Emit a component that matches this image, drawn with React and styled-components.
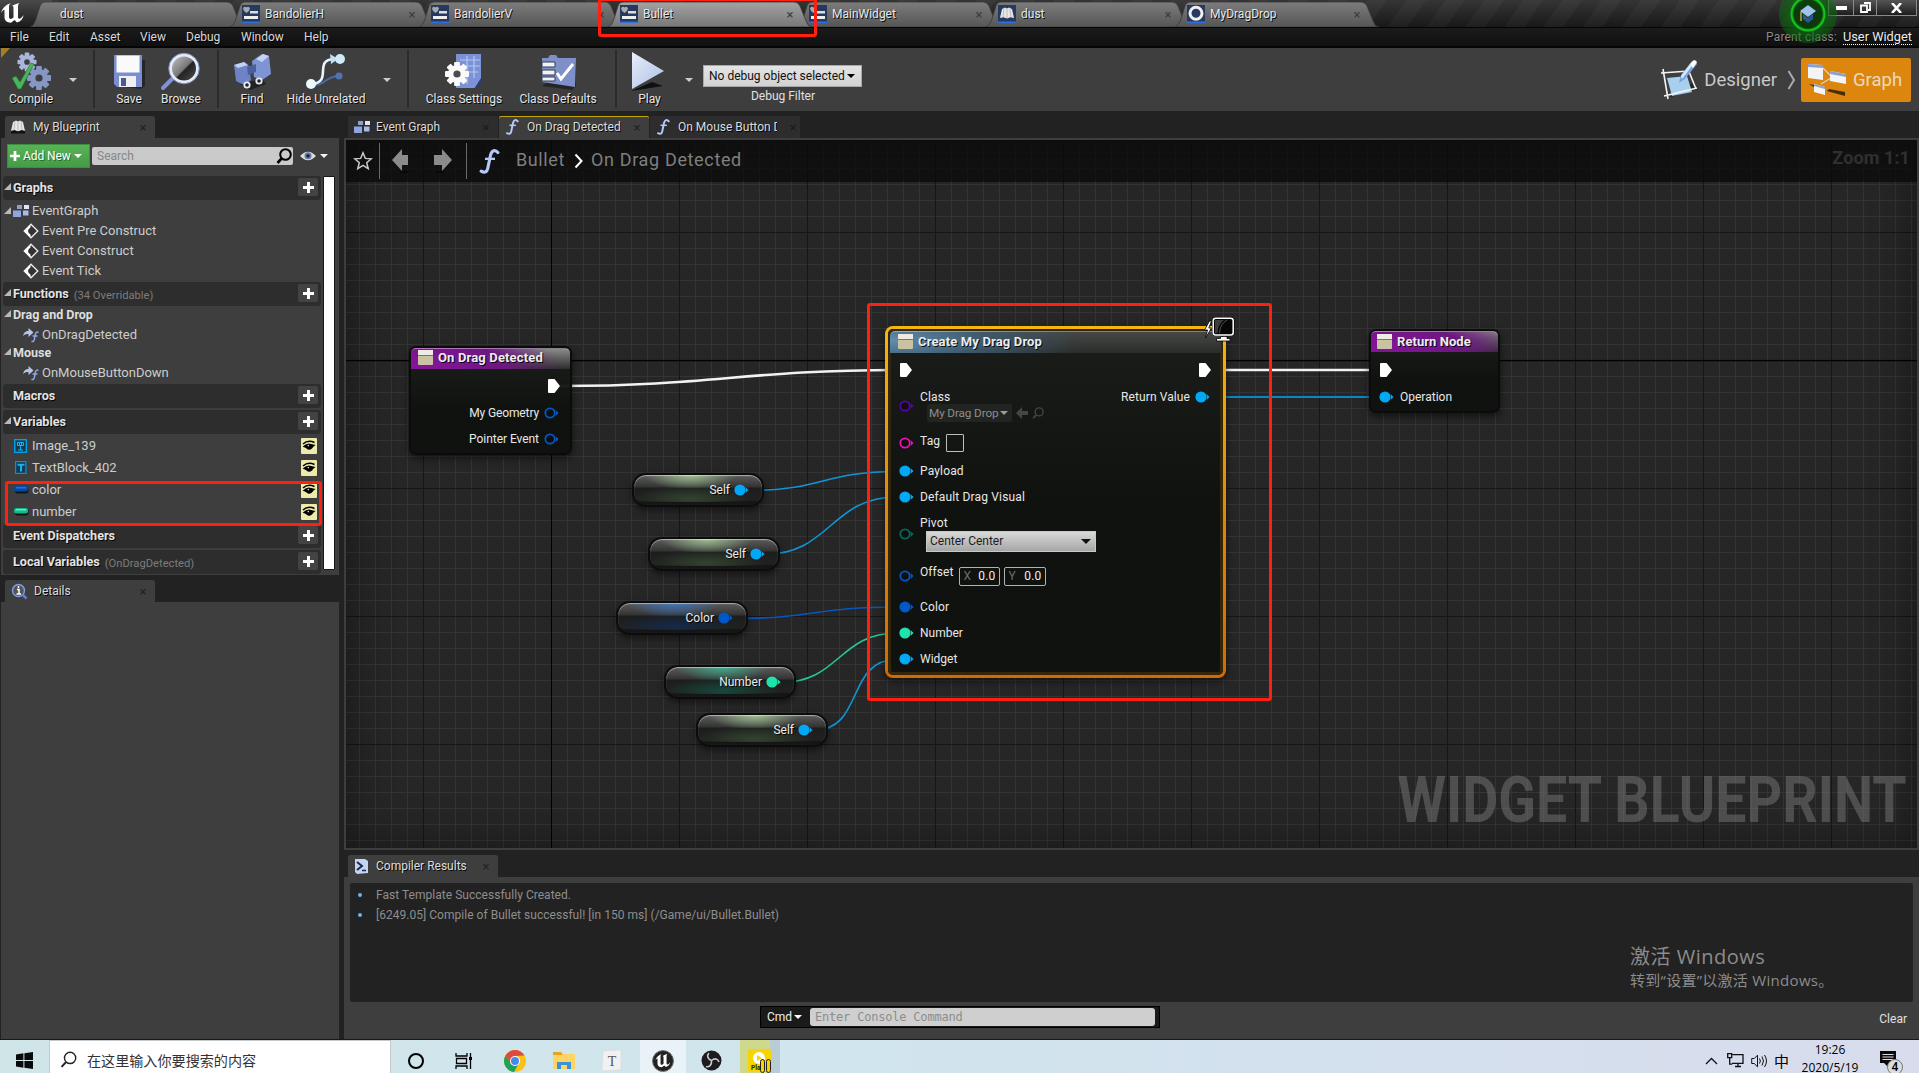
import React from "react";
import styled, { createGlobalStyle, css } from "styled-components";

const Global = createGlobalStyle`
  * { box-sizing: border-box; }
  html, body { margin: 0; padding: 0; background: #222; overflow: hidden; }
  body { font-family: Roboto, "Noto Sans CJK SC", sans-serif; font-size: 12px; color: #e0e0e0; }
  svg { display: block; flex: none; }
`;

const SHADOW = "1px 1px 0 rgba(0,0,0,0.9)";
const BLUE = "#00a8f6";
const STRUCT = "#0058c8";
const GREEN = "#1fe2ac";

/* ---------- shell ---------- */
const Screen = styled.div`
  position: relative;
  width: 1919px;
  height: 1073px;
  display: flex;
  flex-direction: column;
  overflow: hidden;
  background: #222;
`;

/* ---------- title bar ---------- */
const TitleBar = styled.div`
  display: flex;
  height: 28px;
  padding-left: 36px;
  position: relative;
  border-bottom: 1px solid #050505;
  background: linear-gradient(rgba(80, 80, 80, 0.35), rgba(0, 0, 0, 0.35)),
    repeating-linear-gradient(125deg, #303030 0 16px, #262626 16px 32px);
`;
const LogoBox = styled.div`
  position: absolute;
  left: 0;
  top: 0;
  width: 52px;
  height: 27px;
  background: linear-gradient(#4a4a4a, #1b1b1b);
`;
const WindowTab = styled.div`
  position: relative;
  width: ${(p) => p.$w || 189}px;
  height: 25px;
  margin-top: 2px;
  z-index: ${(p) => (p.$active ? 3 : p.$z || 1)};
`;
const TabShape = styled.svg`
  position: absolute;
  left: -6px;
  top: 0;
`;
const TabFace = styled.div`
  position: relative;
  display: flex;
  align-items: center;
  height: 24px;
  padding-left: ${(p) => p.$pad || 6}px;
  padding-right: 1px;
  gap: 5px;
  color: #e6e6e6;
  text-shadow: ${SHADOW};
`;
const Close = styled.span`
  margin-left: auto;
  width: 22px;
  flex: none;
  padding-right: 2px;
  text-align: center;
  color: ${(p) => p.$c || "#3c3c3c"};
  text-shadow: none;
  font-size: 13px;
  line-height: 1;
`;
const WindowButtons = styled.div`
  position: absolute;
  right: 2px;
  top: 0;
  display: flex;
`;
const WinBtn = styled.div`
  width: ${(p) => p.$w}px;
  height: 16px;
  display: flex;
  align-items: center;
  justify-content: center;
  border: 1px solid #8a8a8a;
  border-top: 0;
  margin-left: -1px;
  background: linear-gradient(#555, #1d1d1d);
`;
const TutorialBadge = styled.div`
  position: absolute;
  left: 1779px;
  top: -15px;
  width: 58px;
  height: 58px;
  border-radius: 50%;
  z-index: 6;
  display: flex;
  align-items: center;
  justify-content: center;
  background: radial-gradient(circle, rgba(10, 60, 10, 0.9) 0 14px, #12c41a 16px 17px, rgba(10, 110, 14, 0.7) 18px, rgba(14, 110, 18, 0.45) 28px, rgba(10, 190, 20, 0.3) 29px);
`;

/* ---------- menu ---------- */
const MenuBar = styled.div`
  display: flex;
  align-items: center;
  height: 20px;
  padding: 0 7px 2px 0;
  background: linear-gradient(#1b1b1b, #101010 90%, #050505 90%);
  color: #d8d8d8;
  text-shadow: ${SHADOW};
`;
const MenuItem = styled.span`
  padding-left: 10px;
  width: ${(p) => p.$w}px;
`;
const ParentClass = styled.div`
  margin-left: auto;
  display: flex;
  align-items: center;
  gap: 6px;
  color: #8a8a8a;
  letter-spacing: 0.15px;
  u {
    color: #ececec;
    font-size: 12.8px;
    letter-spacing: 0;
    text-decoration: none;
    border-bottom: 1px dotted #fff;
    line-height: 14px;
  }
`;

/* ---------- toolbar ---------- */
const Toolbar = styled.div`
  display: flex;
  height: 63px;
  background: #3e3e3e;
  position: relative;
`;
const DirtyCorner = styled.div`
  position: absolute;
  left: 1px;
  top: 0;
  border-top: 10px solid #a08020;
  border-right: 9px solid transparent;
`;
const ToolButton = styled.div`
  width: ${(p) => p.$w}px;
  display: flex;
  flex-direction: column;
  align-items: center;
  padding-top: 4px;
  color: #e6e6e6;
  text-shadow: ${SHADOW};
  white-space: nowrap;
  span { line-height: 15px; margin-top: 0; }
`;
const CaretCell = styled.div`
  width: ${(p) => p.$w || 22}px;
  display: flex;
  justify-content: center;
  padding-top: 30px;
`;
const Caret = styled.i`
  display: block;
  flex: none;
  border: ${(p) => p.$s || 4}px solid transparent;
  border-top-color: ${(p) => p.$c || "#ccc"};
  border-bottom: 0;
`;
const Divider = styled.div`
  width: 20px;
  display: flex;
  justify-content: center;
  padding: 2px 0 3px;
  &::before { content: ""; width: 2px; background: #2b2b2b; }
`;
const DebugBox = styled.div`
  display: flex;
  flex-direction: column;
  align-items: center;
  padding-top: 17px;
  gap: 2px;
`;
const DebugSelect = styled.div`
  width: 159px;
  height: 22px;
  margin-left: -1px;
  display: flex;
  align-items: center;
  justify-content: space-between;
  padding: 0 6px 0 5px;
  color: #101010;
  background: linear-gradient(#e4e4e4, #d2d2d2);
  border: 1px solid #a9a9a9;
`;
const Modes = styled.div`
  margin-left: auto;
  padding-right: 8px;
  display: flex;
  align-items: center;
`;
const ModeName = styled.span`
  font-size: 18.5px;
  font-weight: 400;
  color: #c9c9c9;
`;
const Designer = styled.div`
  display: flex;
  align-items: center;
  gap: 4px;
  margin-right: 10px;
`;
const GraphMode = styled.div`
  width: 110px;
  height: 44px;
  display: flex;
  align-items: center;
  gap: 6px;
  padding-left: 6px;
  margin-left: 5px;
  border-radius: 2px;
  background: #dd860e;
  ${ModeName} { color: #ead9bf; }
`;

/* ---------- docking ---------- */
const Workspace = styled.div`
  display: flex;
  height: 929px;
  border-bottom: 1px solid #1b1620;
`;
const LeftColumn = styled.div`
  width: 344px;
  display: flex;
  flex-direction: column;
  padding: 0 5px 0 1px;
`;
const RightColumn = styled.div`
  flex: 1;
  display: flex;
  flex-direction: column;
`;
const TabStrip = styled.div`
  height: 27px;
  padding: 5px 0 0 4px;
  display: flex;
  gap: 1px;
  flex: none;
  background: #222;
`;
const DockTab = styled.div`
  width: 150px;
  height: 22px;
  display: flex;
  align-items: center;
  padding-left: ${(p) => p.$pl || 6}px;
  gap: ${(p) => p.$gap || 6}px;
  color: #dcdcdc;
  text-shadow: ${SHADOW};
  white-space: nowrap;
  border-radius: 2px 2px 0 0;
  background: ${(p) => (p.$dim ? "#2d2d2d" : "#3e3e3e")};
  ${(p) => p.$lit && css`box-shadow: inset 0 1px 0 #c0a60a;`}
`;
const TabText = styled.span`
  overflow: hidden;
  flex: none;
  width: ${(p) => (p.$w ? p.$w + "px" : "auto")};
`;
const BlueprintPanel = styled.div`
  height: 437px;
  background: #3e3e3e;
  padding: 6px 0 0 2px;
`;
const SearchRow = styled.div`
  display: flex;
  align-items: center;
  padding-left: 4px;
  height: 24px;
`;
const AddNew = styled.div`
  width: 83px;
  height: 24px;
  display: flex;
  align-items: center;
  gap: 3px;
  padding-left: 2px;
  color: #fff;
  background: linear-gradient(#58b358, #449c46);
  border: 1px solid #3c8f3f;
  text-shadow: 1px 1px 0 rgba(0, 0, 0, 0.4);
  letter-spacing: -0.1px;
  white-space: nowrap;
`;
const SearchField = styled.div`
  width: 201px;
  height: 18px;
  margin: 0 6px 0 2px;
  display: flex;
  align-items: center;
  justify-content: space-between;
  padding: 0 1px 0 5px;
  border-radius: 2px;
  color: #878787;
  background: #cacaca;
`;
const ViewOptions = styled.div`
  display: flex;
  align-items: center;
  gap: 3px;
`;
const TreeArea = styled.div`
  display: flex;
  gap: 2px;
  padding-top: 8px;
`;
const Tree = styled.div`
  width: 318px;
  display: flex;
  flex-direction: column;
`;
const ScrollThumb = styled.div`
  width: 12px;
  height: 394px;
  background: #fff;
  border: 1px solid #161616;
  border-radius: 1px;
`;
const Section = styled.div`
  height: 24px;
  flex: none;
  margin-bottom: ${(p) => p.$mb || 0}px;
  display: flex;
  align-items: center;
  padding: 0 3px 2px 0;
  background: #2d2d2d;
  border-radius: 3px;
  b { font-size: 12.6px; color: #e4e4e4; text-shadow: ${SHADOW}; }
  small { font-size: 11.2px; color: #7c7c7c; margin-left: 5px; padding-top: 4px; }
`;
const Twisty = styled.i`
  width: 10px;
  height: 10px;
  flex: none;
  display: flex;
  align-items: flex-end;
  padding: 0 0 2px 1px;
  &::before {
    content: "";
    border-bottom: 7px solid ${(p) => (p.$none ? "transparent" : "#b9b9b9")};
    border-left: 7px solid transparent;
  }
`;
const PlusButton = styled.div`
  margin-left: auto;
  width: 20px;
  height: 18px;
  border-radius: 2px;
  background: #434343;
  display: flex;
  align-items: center;
  justify-content: center;
`;
const Row = styled.div`
  height: ${(p) => p.$h || 20}px;
  flex: none;
  margin-bottom: ${(p) => p.$mb || 0}px;
  display: flex;
  align-items: center;
  padding: ${(p) => (p.$bold ? 0 : 1)}px 4px ${(p) => (p.$bold ? 2 : 0)}px ${(p) => p.$in || 0}px;
  font-size: ${(p) => (p.$bold ? 12.5 : 13)}px;
  font-weight: ${(p) => (p.$bold ? 700 : 400)};
  color: ${(p) => (p.$bold ? "#dedede" : "#cdcdcd")};
`;
const RowIcon = styled.span`
  width: ${(p) => p.$w || 18}px;
  display: flex;
  flex: none;
`;
const EyeBadge = styled.div`
  margin-left: auto;
  width: 16px;
  height: 16px;
  background: #eeebaa;
  border-radius: 1px;
  display: flex;
  align-items: center;
  justify-content: center;
`;
const DetailsPanel = styled.div`
  flex: 1;
  background: #3e3e3e;
`;

/* ---------- graph ---------- */
const GraphFrame = styled.div`
  height: 712px;
  border: 2px solid #3e3e3e;
`;
const Canvas = styled.div`
  position: relative;
  height: 708px;
  overflow: hidden;
  background-color: #262626;
  background-image:
    linear-gradient(90deg, #000 1px, transparent 1px),
    linear-gradient(#000 1px, transparent 1px),
    linear-gradient(90deg, #161616 1px, transparent 1px),
    linear-gradient(#161616 1px, transparent 1px),
    linear-gradient(90deg, #343434 1px, transparent 1px),
    linear-gradient(#343434 1px, transparent 1px);
  background-size: 4000px 100%, 100% 4000px, 128px 128px, 128px 128px, 16px 16px, 16px 16px;
  background-position: 205px 0, 0 220px, 77px 0, 0 92px, 13px 0, 0 12px;
`;
const Vignette = styled.div`
  position: absolute;
  inset: 0;
  box-shadow: inset 0 0 46px rgba(0, 0, 0, 0.42);
`;
const GraphHeader = styled.div`
  position: relative;
  height: 42px;
  display: flex;
  align-items: center;
  padding-left: 7px;
  font-size: 18px;
  color: #7f7f7f;
  background: rgba(10, 10, 10, 0.74);
`;
const HeaderRule = styled.div`
  width: 1px;
  height: 36px;
  background: #6a6a6a;
  margin: 0 ${(p) => p.$mr}px 0 ${(p) => p.$ml}px;
`;
const Crumb = styled.span`
  width: ${(p) => p.$w}px;
  margin: -4px 0 0 ${(p) => p.$ml}px;
  letter-spacing: ${(p) => p.$ls || 0}px;
  white-space: nowrap;
`;
const ZoomLabel = styled.span`
  margin-left: auto;
  margin-right: 7px;
  margin-top: -7px;
  font-weight: 700;
  font-size: 18px;
  letter-spacing: 0.1px;
  color: #303030;
  white-space: nowrap;
`;
const Watermark = styled.div`
  position: absolute;
  right: 10px;
  bottom: 10px;
  font-size: 64.5px;
  line-height: 76px;
  font-weight: 700;
  color: rgba(120, 120, 120, 0.5);
  white-space: nowrap;
  transform: scaleX(0.859);
  transform-origin: right center;
`;
const Wires = styled.svg`
  position: absolute;
  left: 0;
  top: 0;
`;
const Node = styled.div`
  position: absolute;
  left: ${(p) => p.$x}px;
  top: ${(p) => p.$y}px;
  width: ${(p) => p.$w}px;
  height: ${(p) => p.$h}px;
  border-radius: 7px;
  border: 2px solid #0b0b0b;
  background: linear-gradient(rgba(28, 30, 28, 0.96), rgba(14, 17, 14, 0.96) 60%);
  box-shadow: 0 3px 7px rgba(0, 0, 0, 0.55);
  color: #e8e8e8;
  letter-spacing: 0.15px;
  ${(p) =>
    p.$selected &&
    css`
      border: 3px solid transparent;
      border-radius: 8px;
      padding: 2px;
      background:
        linear-gradient(#1b1d1b, #0f120f 50%) padding-box,
        linear-gradient(#f5b60d, #e08a08 50%, #d26a04) border-box;
      box-shadow: 0 3px 7px rgba(0, 0, 0, 0.55), inset 0 0 0 3px #33260a;
    `}
`;
const NodeTitle = styled.div`
  height: ${(p) => p.$h || 21}px;
  display: flex;
  align-items: center;
  gap: 5px;
  padding: 0 0 ${(p) => p.$pb || 1}px ${(p) => p.$pl || 7}px;
  font-weight: 700;
  font-size: 13px;
  letter-spacing: ${(p) => (p.$ls === undefined ? 0.15 : p.$ls)}px;
  color: #ececec;
  text-shadow: ${SHADOW};
  white-space: nowrap;
  border-radius: 5px 5px 0 0;
  border-top: 1px solid rgba(255, 255, 255, 0.4);
  background: ${(p) =>
    p.$blue
      ? "radial-gradient(ellipse 240px 60px at 0 40%, #5f8db0, rgba(61,92,112,.85) 40%, rgba(52,54,54,0) 78%), linear-gradient(#454846, #2b2d2b)"
      : "radial-gradient(ellipse 170px 50px at 5% 80%, #86149b, #6c1880 50%, rgba(60,60,60,0) 82%), linear-gradient(#8a8a8a, #2c2e2c)"};
`;
const NodeBody = styled.div`
  display: flex;
  justify-content: space-between;
`;
const PinColumn = styled.div`
  display: flex;
  flex-direction: column;
  align-items: ${(p) => (p.$right ? "flex-end" : "flex-start")};
  padding: ${(p) => p.$pad};
`;
const PinRow = styled.div`
  display: flex;
  align-items: center;
  height: ${(p) => p.$h || 26}px;
  gap: ${(p) => p.$gap || 6}px;
  margin-top: ${(p) => p.$mt || 0}px;
  margin-left: ${(p) => p.$ml || 0}px;
  margin-right: ${(p) => p.$mr || 0}px;
  white-space: nowrap;
`;
const PinLabel = styled.span`
  margin-top: ${(p) => p.$up || -1}px;
  line-height: ${(p) => (p.$lh ? p.$lh + "px" : "normal")};
  ${(p) => p.$ls !== undefined && css`letter-spacing: ${p.$ls}px;`}
`;
const Stack = styled.div`
  display: flex;
  flex-direction: column;
  align-self: flex-start;
`;
const ClassPick = styled.div`
  display: flex;
  align-items: center;
  gap: 4px;
  margin: -2px 0 0 7px;
`;
const ClassValue = styled.div`
  width: 85px;
  height: 18px;
  border-radius: 2px;
  background: #222422;
  display: flex;
  align-items: center;
  justify-content: space-between;
  padding: 0 4px 1px 2px;
  font-size: 11.8px;
  letter-spacing: -0.15px;
  color: #8d8d8d;
`;
const TagBox = styled.div`
  width: 18px;
  height: 18px;
  border: 1px solid #bdbdbd;
  border-radius: 1px;
`;
const PivotSelect = styled.div`
  width: 170px;
  height: 21px;
  margin: -1px 0 0 6px;
  display: flex;
  align-items: center;
  justify-content: space-between;
  padding: 0 4px 1px 3px;
  letter-spacing: 0;
  color: #1c1c1c;
  border: 1px solid #c9c9c9;
  background: linear-gradient(#d9d9d9, #a6a6a6);
`;
const VectorBox = styled.div`
  width: ${(p) => p.$w}px;
  height: 19px;
  margin-left: ${(p) => p.$ml || 0}px;
  border: 1px solid #b2b2b2;
  border-radius: 2px;
  display: flex;
  align-items: center;
  justify-content: space-between;
  padding: 0 4px 0 3px;
  color: #f0f0f0;
  i { font-style: normal; color: #6d6d6d; }
`;
const VarNode = styled.div`
  position: absolute;
  left: ${(p) => p.$x}px;
  top: ${(p) => p.$y}px;
  width: 132px;
  height: 34px;
  border-radius: 14px;
  border: 2px solid #0c0c0c;
  display: flex;
  align-items: center;
  justify-content: flex-end;
  gap: 4px;
  padding-right: 13px;
  color: #ececec;
  box-shadow: 0 3px 6px rgba(0, 0, 0, 0.5), inset 0 1px 1px rgba(255, 255, 255, 0.5);
  background:
    radial-gradient(ellipse 46px 15px at 44% 0, ${(p) => p.$tint}, transparent) 0 0 / 100% 13px no-repeat,
    radial-gradient(ellipse 58px 14px at 44% 80%, ${(p) => p.$glow}, transparent) 0 13px / 100% 14px no-repeat,
    linear-gradient(#5c5c5c, #323332 12px, #1c1d1c 13px, #202220 25px, #131413 27px, #171817);
  ${PinLabel} { text-shadow: ${SHADOW}; }
`;
const EventBadge = styled.div`
  position: absolute;
  left: 857px;
  top: 176px;
`;

/* ---------- compiler results ---------- */
const ResultsPanel = styled.div`
  height: 162px;
  background: #3e3e3e;
  padding: 6px 6px 0;
`;
const ResultsLog = styled.div`
  height: 119px;
  background: #222;
  border-radius: 2px;
  padding: 2px 0 0 8px;
  color: #8e8e8e;
`;
const LogLine = styled.div`
  display: flex;
  align-items: center;
  height: 20px;
  gap: 14px;
  letter-spacing: 0.03px;
  &::before { content: ""; width: 4px; height: 4px; border-radius: 2px; background: #6fb2e4; }
`;
const ConsoleRow = styled.div`
  display: flex;
  align-items: center;
  height: 31px;
  padding: 0 6px 0 410px;
  justify-content: space-between;
  > span { padding-top: 2px; }
`;
const Console = styled.div`
  width: 400px;
  height: 22px;
  margin-top: -1px;
  display: flex;
  align-items: center;
  border: 1px solid #000;
  background: #1a1a1a;
  color: #efefef;
  gap: 2px;
  padding-left: 6px;
`;
const ConsoleInput = styled.div`
  width: 345px;
  height: 18px;
  margin-left: auto;
  margin-right: 4px;
  border-radius: 3px;
  background: #cfcfcf;
  color: #8d8d8d;
  font: 12px/18px "DejaVu Sans Mono", monospace;
  letter-spacing: -0.2px;
  padding-left: 5px;
`;

/* ---------- taskbar ---------- */
const Taskbar = styled.div`
  display: flex;
  height: 33px;
  overflow: hidden;
  background: linear-gradient(90deg, #cfe5e8, #d0e6ed 40%, #d3e1ee 65%, #d8dcec);
  color: #000;
`;
const TaskCell = styled.div`
  width: ${(p) => p.$w}px;
  height: 41px;
  flex: none;
  display: flex;
  align-items: center;
  justify-content: center;
  font-size: 15px;
  background: ${(p) => p.$bg || "transparent"};
`;
const TaskSearch = styled.div`
  width: 342px;
  height: 41px;
  display: flex;
  align-items: center;
  padding: 0 0 2px 10px;
  gap: 10px;
  background: #fff;
  border: 1px solid #c3c9cb;
  font: 14.1px "Noto Sans CJK SC", sans-serif;
  color: #333;
`;
const Tray = styled.div`
  margin-left: auto;
  padding-right: 5px;
  display: flex;
  height: 41px;
  align-items: center;
  font-family: "Noto Sans CJK SC", sans-serif;
`;
const Clock = styled.div`
  width: 76px;
  text-align: center;
  font: 12px/18px "Open Sans", sans-serif;
  margin-top: -3px;
`;
const ActivateNote = styled.div`
  position: absolute;
  left: 1630px;
  top: 942px;
  font-family: "Open Sans", "Noto Sans CJK SC", sans-serif;
  color: #8c8c8c;
  font-size: 20px;
  line-height: 30px;
  letter-spacing: 0.5px;
  white-space: nowrap;
  p { margin: -1px 0 0; font-size: 15px; line-height: 18px; letter-spacing: 0.3px; }
`;
const RedBox = styled.div`
  position: absolute;
  left: ${(p) => p.$x}px;
  top: ${(p) => p.$y}px;
  width: ${(p) => p.$w}px;
  height: ${(p) => p.$h}px;
  border: 3px solid #ff2010;
  border-radius: 3px;
  z-index: 10;
`;

/* ---------- icons ---------- */
const Plus = ({ s = 11 }) => (
  <svg width={s} height={s} viewBox="0 0 11 11"><path d="M4 0h3v4h4v3H7v4H4V7H0V4h4z" fill="#fff" /></svg>
);
const WidgetIcon = () => (
  <svg width="18" height="18" viewBox="0 0 18 18">
    <rect width="18" height="17" fill="#253a5e" />
    <rect y="16.500" width="18" height="1.500" fill="#2f6fe0" />
    <path d="M1 3.2Q2.800.8 4.500 2.600Q6.200.8 8 3.200Q8 5.500 4.500 8Q1 5.500 1 3.200z" fill="#aaa" />
    <rect x="8" y="6" width="8" height="2.500" fill="#ddd" />
    <rect x="2" y="11" width="14" height="3" fill="#eee" />
  </svg>
);
const BookIcon = ({ framed }) => (
  <svg width="18" height="18" viewBox="0 0 18 18">
    {framed && <><rect width="18" height="17" fill="#253a5e" /><rect y="16.500" width="18" height="1.500" fill="#2f6fe0" /></>}
    <path d="M2 13L4 4l3-1.500 2 1 2-1 3 1.500 2 9-3.500-.8L9 13.500l-3.500-1.300z" fill="#e6e6e6" />
    <path d="M6 3.500L5 12M9 4v9M12 3.500l1 8.500" stroke="#aaa" strokeWidth=".7" />
    {!framed && <path d="M2 13l3.500-.8L9 13.500l3.500-1.300L16 13v2.500H2z" fill="#111" />}
  </svg>
);
const RingIcon = () => (
  <svg width="18" height="18" viewBox="0 0 18 18">
    <rect width="18" height="17" fill="#253a5e" /><rect y="16.500" width="18" height="1.500" fill="#2f6fe0" />
    <circle cx="9" cy="8.300" r="6" fill="none" stroke="#f0f0f0" strokeWidth="3" />
  </svg>
);
const UNREAL_PATH =
  "M1 13C2.500 8 6 4.500 11 3C9.500 4.200 9 5 9 6.500V17c0 1.500 1.200 2.500 3 1.500l1.500-1V8c0-1.500-.5-2-1.500-2.200C14 5 17 3.500 19.500 3C18.300 4 18 5 18 6.500V17c0 1.500.8 2 2 1.500c1.500-.6 2.800-2 3.500-3.500c-.4 4-3 6.500-6.500 7.500L14.500 20L11 22.800C6.500 22.500 4.500 20.500 4.500 17v-6.500C4.500 8.500 2.500 10.500 1 13z";
const Unreal = () => (
  <svg width="26" height="26" viewBox="0 0 26 26"><path d={UNREAL_PATH} fill="#fff" /></svg>
);
const Gear = ({ x, y, r, fill, hole }) => (
  <g transform={`translate(${x} ${y}) scale(${r / 10})`}>
    {[0, 45, 90, 135].map((a) => <rect key={a} x="-2.400" y="-10" width="4.800" height="20" rx=".8" transform={`rotate(${a})`} fill={fill} />)}
    <circle r="7.500" fill={fill} /><circle r="3" fill={hole} />
  </g>
);
const CompileIcon = () => (
  <svg width="42" height="40" viewBox="0 0 42 40">
    <Gear x={17} y={10} r={9.500} fill="#a9b6dc" hole="#3e3e3e" />
    <Gear x={29} y={26} r={12} fill="#8796c4" hole="#3e3e3e" />
    <path d="M2 26l4-2 4 6L21 11l3 1L11 37H8z" fill="#4cb45c" stroke="#1d6e2b" strokeWidth=".6" />
  </svg>
);
const SaveIcon = () => (
  <svg width="36" height="40" viewBox="0 0 36 40">
    <path d="M4 34l26 3 4-3V8H4z" fill="#181818" opacity=".6" />
    <path d="M3 3h28v32H6l-3-3z" fill="#7b8fd0" />
    <rect x="5.500" y="3.500" width="23" height="17" fill="#fafafa" />
    <rect x="8" y="24" width="17" height="11" fill="#eef0f6" /><rect x="10" y="26" width="5" height="8" fill="#4c5a8c" />
  </svg>
);
const BrowseIcon = () => (
  <svg width="42" height="40" viewBox="0 0 42 40">
    <defs><linearGradient id="lens" x1="0" y1="0" x2="1" y2="1"><stop offset="0" stopColor="#ccc" /><stop offset=".5" stopColor="#777" /><stop offset=".55" stopColor="#222" /><stop offset="1" stopColor="#555" /></linearGradient></defs>
    <path d="M3 36L14 25" stroke="#7f93d3" strokeWidth="4" strokeLinecap="round" />
    <circle cx="24" cy="16.500" r="13.500" fill="url(#lens)" stroke="#e6ebf8" strokeWidth="3" />
    <circle cx="24" cy="16.500" r="15.300" fill="none" stroke="#7f93d3" strokeWidth="1" />
  </svg>
);
const FindIcon = () => (
  <svg width="40" height="40" viewBox="0 0 40 40">
    <path d="M8 32l10 6 16-6-4-5z" fill="#161616" opacity=".7" />
    <path d="M2 13l10-3 5 4 2 14-7 5-8-4z" fill="#6d83c6" /><path d="M20 9l10-7 7 2 2 18-9 6-8-3z" fill="#7f94d4" />
    <path d="M2 13l10-3 4 3-10 3zM24 7l7-5 6 2-7 6z" fill="#c5d0f2" />
    <path d="M15 15l9-3v8l-8 3z" fill="#4b5f9c" />
    <circle cx="15" cy="33" r="3.600" fill="#e6eaf4" /><circle cx="15" cy="33" r="1.800" fill="#222" />
    <circle cx="27" cy="29" r="3.600" fill="#e6eaf4" /><circle cx="27" cy="29" r="1.800" fill="#222" />
  </svg>
);
const HideIcon = () => (
  <svg width="42" height="40" viewBox="0 0 42 40">
    <path d="M9 33C22 33 18 25 34 24" fill="none" stroke="#4a6aa4" strokeWidth="2" />
    <path d="M7 32C28 30 8 8 29 7" fill="none" stroke="#e9f4ff" strokeWidth="2.600" />
    <path d="M25 2l8 5-7 5z" fill="#bfe0f7" />
    <circle cx="6" cy="32" r="5" fill="#eef8ff" /><circle cx="35" cy="7" r="5" fill="#cfeaf9" /><circle cx="34" cy="24" r="3.500" fill="#5272b0" />
  </svg>
);
const ClassSettingsIcon = () => (
  <svg width="42" height="40" viewBox="0 0 42 40">
    <path d="M13 2h25v26l-6 8H13z" fill="#7b92d6" /><path d="M38 26v6l-7 5z" fill="#2c3c70" />
    <path d="M17 8h20M17 14h20M17 20h18M24 4v28M31 4v22" stroke="#b6c6f2" strokeWidth="1.200" />
    <Gear x={14} y={22} r={12} fill="#fafafa" hole="#4a4a52" />
  </svg>
);
const ClassDefaultsIcon = () => (
  <svg width="42" height="40" viewBox="0 0 42 40">
    <path d="M5 34l30 4 4-4V10z" fill="#161616" opacity=".6" />
    <path d="M5 6h6l2-3h6l2 3h18l-1 29L5 30z" fill="#7f90c8" />
    <path d="M5 10h13v5H5zM5 18h13v5H5zM5 25h13v4H5z" fill="#f0f2f8" stroke="#333a55" strokeWidth="1" />
    <path d="M20 21l4 6L36 12" fill="none" stroke="#fff" strokeWidth="3" />
  </svg>
);
const PlayIcon = () => (
  <svg width="42" height="40" viewBox="0 0 42 40">
    <path d="M2 39l32-5-11-4z" fill="#101010" />
    <defs><linearGradient id="play" x1="0" y1="0" x2="1" y2="1"><stop offset="0" stopColor="#e9eefc" /><stop offset="1" stopColor="#a9c0e4" /></linearGradient></defs>
    <path d="M3 0L35 19 3 37z" fill="url(#play)" />
  </svg>
);
const DesignerIcon = () => (
  <svg width="40" height="42" viewBox="0 0 40 42">
    <path d="M8 39l30-9-6-6z" fill="#161616" opacity=".6" />
    <path d="M7 19l20-2 5 16-20 4z" fill="#a8d0ee" />
    <path d="M1 14l28-2M3 10l5 30M28 10l8 20M4 37l33-8" stroke="#f4f4f4" strokeWidth="1.600" />
    <path d="M19 24l2-8L32 2l4-1 1 4-12 15z" fill="#78a4e0" /><path d="M30 5l4-4 3 2-4 6z" fill="#fff" /><path d="M21 17l9-12 2 2-10 13z" fill="#d8e8fa" />
  </svg>
);
const GraphIcon = () => (
  <svg width="40" height="36" viewBox="0 0 40 36">
    <path d="M2 22l8 5 2-3zM22 27l16 3v4l-18-5z" fill="#4a2c05" />
    <path d="M16 6l8 8M14 22l10-6" stroke="#d9d2c8" strokeWidth="1.200" />
    <path d="M1 2l15 1v15L1 16z" fill="#f4f4f6" /><path d="M1 2l15 1v3L1 5z" fill="#8ca0d4" />
    <path d="M23 9l16 3v10l-16-3z" fill="#f4f4f6" /><path d="M23 9l16 3v3l-16-3z" fill="#8ca0d4" />
    <path d="M7 22l11 3v8L7 30z" fill="#f4f4f6" /><path d="M7 22l11 3v2L7 24z" fill="#8ca0d4" />
  </svg>
);
const GridIcon = () => (
  <svg width="16" height="14" viewBox="0 0 16 14">
    <rect x="4" y="1" width="5" height="4" fill="#8e9fc9" /><rect x="11" y="1" width="5" height="4" fill="#dfe6f8" />
    <rect x="0" y="6.500" width="8" height="6.500" fill="#8fa5e2" /><rect x="10" y="6.500" width="5.500" height="5" fill="#a9b9ea" />
  </svg>
);
const FuncIcon = ({ s = 16 }) => (
  <svg width={s} height={s} viewBox="0 0 16 16">
    <path d="M12.700 2.300C11 .2 8.800.8 8 4L6.200 12.600C5.800 14.500 4.500 15.600 2 14.200" fill="none" stroke="#b4c8fb" strokeWidth="2" strokeLinecap="round" />
    <path d="M4.500 6.300h6.400" stroke="#b4c8fb" strokeWidth="1.500" />
  </svg>
);
const OverrideIcon = () => (
  <svg width="17" height="16" viewBox="0 0 17 16">
    <path d="M0 9C1 5 3 4 5.500 4V1l5 4.500-5 4.500V7C3 7 1.500 7.500 0 9z" fill="#b7c4e4" />
    <path d="M15.500 5.500C14 4.500 12.700 5.300 12.300 7.500L11.300 12.500C11 14.300 10 15 8.500 14.300M9.500 9h5" fill="none" stroke="#8fa6e8" strokeWidth="1.500" />
  </svg>
);
const EventIcon = () => (
  <svg width="16" height="16" viewBox="0 0 16 16">
    <path d="M8 1.200L14.800 8 8 14.800 1.200 8z" fill="#333" stroke="#eee" strokeWidth="1.300" />
    <path d="M7.500 1.500L1.200 8l6.300 6.500V11.500Q5 10 5 8T7.500 4.500z" fill="#fff" />
  </svg>
);
const SearchGlyph = ({ s = 16, c = "#000", w = 2 }) => (
  <svg width={s} height={s} viewBox="0 0 16 16"><circle cx="9.500" cy="6.500" r="5.300" fill="none" stroke={c} strokeWidth={w} /><path d="M5.600 10.500L1.500 15" stroke={c} strokeWidth={w + 0.6} /></svg>
);
const ViewEye = () => (
  <svg width="18" height="12" viewBox="0 0 18 12"><path d="M1 6Q9-2.500 17 6 9 14.500 1 6z" fill="#dcdcdc" /><circle cx="9" cy="5.800" r="3.500" fill="#5f78a8" /><circle cx="9" cy="5.800" r="1.600" fill="#18202c" /></svg>
);
const Eye = () => (
  <svg width="14" height="12" viewBox="0 0 14 12"><path d="M1 4Q6-.5 12.500 2.500" fill="none" stroke="#000" strokeWidth="1.600" /><path d="M.5 7Q3 4 7 3.600L13.500 5Q11 6.500 10 8.500 7 11 4.500 8.500 2.500 6.500.5 7z" fill="#000" /><circle cx="6.300" cy="5.600" r=".8" fill="#ddd" /></svg>
);
const NodeIcon = () => (
  <svg width="15" height="15" viewBox="0 0 15 15"><rect width="15" height="15" rx="1" fill="#c9c2a3" /><rect width="15" height="5" fill="#eeece2" /><rect y="5" width="15" height="1" fill="#7c755c" /></svg>
);
const ExecPin = () => (
  <svg width="12" height="14" viewBox="0 0 12 14"><path d="M0 1Q0 0 1 0H6.500L12 7 6.500 14H1Q0 14 0 13z" fill="#fff" /></svg>
);
const Pin = ({ c, open }) => (
  <svg width="15" height="12" viewBox="0 0 15 12">
    <circle cx="6" cy="6" r={open ? 4.700 : 5.600} fill={open ? "#0c0f0c" : c} stroke={open ? c : "none"} strokeWidth="1.800" />
    <path d="M11.500 3L14.600 6l-3.100 3Q12.600 6 11.500 3z" fill={c} />
  </svg>
);
const InfoIcon = () => (
  <svg width="17" height="17" viewBox="0 0 17 17"><circle cx="7.500" cy="7.500" r="6" fill="#555" stroke="#7f9be8" strokeWidth="1.500" /><path d="M12 12l3.500 3.500" stroke="#5c7fe0" strokeWidth="2.500" /><path d="M7.500 3v2M6 6.500h2v4.500M5.500 11h4.500" stroke="#fff" strokeWidth="1.500" fill="none" /></svg>
);
const LogIcon = () => (
  <svg width="16" height="17" viewBox="0 0 16 17"><path d="M1 1h10l3 2v12l-11 1-2-2z" fill="#c4d4f4" /><path d="M3 4l5 4-5 4" fill="none" stroke="#1c2848" strokeWidth="2" /><path d="M8 12.500h4" stroke="#1c2848" strokeWidth="1.500" /></svg>
);
const MonitorBadge = () => (
  <svg width="33" height="28" viewBox="0 0 33 28">
    <path d="M6.500 5L1.500 14h3L2.500 22 8.500 12H5.800L8.500 5z" fill="#fff" stroke="#000" strokeWidth=".8" />
    <rect x="9" y="1" width="22.500" height="19" rx="3.500" fill="#000" />
    <rect x="10.200" y="2.200" width="20" height="16.800" rx="2.500" fill="#060606" stroke="#fff" strokeWidth="1.500" />
    <path d="M12 4h9C16 8 15 12 14.500 17H12z" fill="#3c3c3c" /><path d="M24 4C18 8 17 12 16.500 17" stroke="#555" fill="none" />
    <path d="M17.500 20.500h6.500v2h3v2.500H13.500v-2.500h4z" fill="#fff" stroke="#000" strokeWidth=".8" />
  </svg>
);
const ImageVarIcon = () => (
  <svg width="13" height="14" viewBox="0 0 13 14"><rect x=".7" y=".7" width="11.600" height="12.600" fill="#123c52" stroke="#00a0e8" strokeWidth="1.400" /><path d="M3.500 3.500h6v3h-6zM6.500 6v5M4 11h5M5.500 3v4M7.500 3v4" stroke="#19b0f4" fill="none" /></svg>
);
const TextVarIcon = () => (
  <svg width="13" height="13" viewBox="-1 0 13 13"><rect x=".6" y=".6" width="10.300" height="11.800" fill="#143c50" stroke="#0093d6" strokeWidth="1.200" /><path d="M2.500 3.700h7M6 3v7.500" stroke="#19b0f4" strokeWidth="2" /></svg>
);
const Pill = ({ c, t }) => (
  <svg width="16" height="9" viewBox="0 0 16 9"><rect x="1" y="1.500" width="13.500" height="7" rx="3" fill="#141414" /><rect x="0" y="1" width="14" height="5.500" rx="2.500" fill={c} /><rect x="1.500" y="2" width="11" height="1.500" rx=".7" fill={t} /></svg>
);

/* ---------- pieces ---------- */
const shapeFill = (active) => (active ? ["#a3a3a3", "#777"] : ["#7c7c7c", "#565656"]);
function EditorTab({ name, icon, active, w = 189, pad, z, noClose }) {
  const [a, b] = shapeFill(active);
  const id = "t" + name + z;
  return (
    <WindowTab $w={w} $active={active} $z={z}>
      <TabShape width={w + 18} height="25" viewBox={`0 0 ${w + 18} 25`}>
        <defs><linearGradient id={id} x1="0" y1="0" x2="0" y2="1"><stop offset="0" stopColor={a} /><stop offset="1" stopColor={b} /></linearGradient></defs>
        <path d={`M0 25Q4 24 6 17L10 4Q11 0 15 0H${w - 3}Q${w + 1} 0 ${w + 3} 4L${w + 9} 19Q${w + 11} 25 ${w + 15} 25z`} fill={`url(#${id})`} stroke="#3a3a3a" strokeWidth=".8" />
      </TabShape>
      <TabFace $pad={pad}>
        {icon}
        <span>{name}</span>
        {!noClose && <Close>×</Close>}
      </TabFace>
    </WindowTab>
  );
}

function Tool({ w, icon, label }) {
  return <ToolButton $w={w}>{icon}<span>{label}</span></ToolButton>;
}

function SectionHead({ title, note, mb, closed }) {
  return (
    <Section $mb={mb}>
      <Twisty $none={closed} />
      <b>{title}</b>
      {note && <small>{note}</small>}
      <PlusButton><Plus /></PlusButton>
    </Section>
  );
}

function Variable({ icon, name, mb }) {
  return (
    <Row $h={22} $in={11} $mb={mb}>
      <RowIcon $w={18}>{icon}</RowIcon>
      {name}
      <EyeBadge><Eye /></EyeBadge>
    </Row>
  );
}

function VariableNode({ x, y, label, color, tint, glow }) {
  return (
    <VarNode $x={x} $y={y} $tint={tint} $glow={glow}>
      <PinLabel>{label}</PinLabel>
      <Pin c={color} />
    </VarNode>
  );
}

const wire = (x1, y1, x2, y2, k = 0.5) => {
  const d = (x2 - x1) * k;
  return `M${x1} ${y1}C${x1 + d} ${y1} ${x2 - d} ${y2} ${x2} ${y2}`;
};

function GraphCanvas() {
  return (
    <Canvas>
      <Vignette />
      <Watermark>WIDGET BLUEPRINT</Watermark>
      <Wires width="1571" height="708" fill="none">
        <path d={wire(214, 246, 552, 230, 0.45)} stroke="#f2f2f2" strokeWidth="2.600" />
        <path d="M878 230H1025" stroke="#f2f2f2" strokeWidth="2.600" />
        <path d="M878 257H1025" stroke="#0a86c4" strokeWidth="1.800" />
        <path d={wire(403, 350.500, 551, 331.500)} stroke="#0d96d8" strokeWidth="1.600" />
        <path d={wire(418, 414.500, 551, 357)} stroke="#0d96d8" strokeWidth="1.600" />
        <path d={wire(387, 478.500, 551, 467)} stroke="#0a55bf" strokeWidth="1.600" />
        <path d={wire(435, 542.500, 551, 493)} stroke="#23c79b" strokeWidth="1.600" />
        <path d={wire(467, 590.500, 551, 519.500, 0.62)} stroke="#0d96d8" strokeWidth="1.600" />
      </Wires>
      <GraphHeader>
        <svg width="20" height="20" viewBox="0 0 20 20"><path d="M10 1.800l2.300 5.600 6 .4-4.600 3.900 1.500 5.900L10 14.400l-5.200 3.200 1.500-5.900L1.700 7.800l6-.4z" fill="none" stroke="#c9c9c9" strokeWidth="1.500" /></svg>
        <HeaderRule $ml={6} $mr={12} />
        <svg width="60" height="26" viewBox="0 0 60 26">
          <path d="M0 12L10 1v6h6v10h-6v6zM60 12L50 1v6h-8v10h8v6z" fill="#8b8b8b" />
          <path d="M8 24h8M44 24h8" stroke="#000" strokeWidth="1.500" opacity=".6" />
        </svg>
        <HeaderRule $ml={14} $mr={11} />
        <FuncIcon s={25} />
        <Crumb $w={58} $ls={0.6} $ml={13}>Bullet</Crumb>
        <svg width="10" height="16" viewBox="0 0 10 16"><path d="M1.500 1.500L7.500 8l-6 6.500" fill="none" stroke="#fff" strokeWidth="2" /></svg>
        <Crumb $w={160} $ls={0.65} $ml={7}>On Drag Detected</Crumb>
        <ZoomLabel>Zoom 1:1</ZoomLabel>
      </GraphHeader>

      <Node $x={63} $y={206} $w={163} $h={109}>
        <NodeTitle $pb={3}>
          <NodeIcon />On Drag Detected
        </NodeTitle>
        <NodeBody>
          <span />
          <PinColumn $right $pad="10px 10px 0 0">
            <PinRow $h={14}><ExecPin /></PinRow>
            <PinRow $gap={5} $mr={1} $mt={7}><PinLabel $ls={-0.12}>My Geometry</PinLabel><Pin c={STRUCT} open /></PinRow>
            <PinRow $gap={5} $mr={1}><PinLabel $ls={-0.05}>Pointer Event</PinLabel><Pin c={STRUCT} open /></PinRow>
          </PinColumn>
        </NodeBody>
      </Node>

      <Node $x={539} $y={186} $w={341} $h={352} $selected>
        <NodeTitle $h={22} $pl={8} $pb={2} $blue>
          <NodeIcon />Create My Drag Drop
        </NodeTitle>
        <NodeBody>
          <PinColumn $pad="10px 0 0 9px">
            <PinRow $h={14} $ml={1}><ExecPin /></PinRow>
            <PinRow $h={34} $mt={12}>
              <Pin c="#5a00b0" open />
              <Stack>
                <PinLabel $lh={18}>Class</PinLabel>
                <ClassPick>
                  <ClassValue>My Drag Drop<Caret $c="#9a9a9a" /></ClassValue>
                  <svg width="12" height="12" viewBox="0 0 12 12"><path d="M0 6l6-6v4h6v4H6v4z" fill="#444644" /></svg>
                  <SearchGlyph s={12} c="#444644" w={1.800} />
                </ClassPick>
              </Stack>
            </PinRow>
            <PinRow $mt={7}><Pin c="#f010b8" open /><PinLabel $up={-4}>Tag</PinLabel><TagBox /></PinRow>
            <PinRow $mt={2}><Pin c={BLUE} /><PinLabel>Payload</PinLabel></PinRow>
            <PinRow><Pin c={BLUE} /><PinLabel>Default Drag Visual</PinLabel></PinRow>
            <PinRow $h={37} $mt={5}>
              <Pin c="#066a5c" open />
              <Stack><PinLabel $lh={18}>Pivot</PinLabel><PivotSelect>Center Center<Caret $s={5} $c="#111" /></PivotSelect></Stack>
            </PinRow>
            <PinRow $h={30} $mt={9}>
              <Pin c={STRUCT} open /><PinLabel $up={-8} $ls={0.05}>Offset</PinLabel>
              <VectorBox $w={41}><i>X</i>0.0</VectorBox>
              <VectorBox $w={42} $ml={-2}><i>Y</i>0.0</VectorBox>
            </PinRow>
            <PinRow $mt={3}><Pin c={STRUCT} /><PinLabel>Color</PinLabel></PinRow>
            <PinRow><Pin c={GREEN} /><PinLabel $ls={0}>Number</PinLabel></PinRow>
            <PinRow><Pin c={BLUE} /><PinLabel $ls={0}>Widget</PinLabel></PinRow>
          </PinColumn>
          <PinColumn $right $pad="10px 10px 0 0">
            <PinRow $h={14}><ExecPin /></PinRow>
            <PinRow $gap={5} $mt={7} $mr={1}><PinLabel $ls={0.1}>Return Value</PinLabel><Pin c={BLUE} /></PinRow>
          </PinColumn>
        </NodeBody>
      </Node>

      <Node $x={1023} $y={189} $w={131} $h={84}>
        <NodeTitle $pb={2} $pl={6} $ls={0.05}>
          <NodeIcon />Return Node
        </NodeTitle>
        <NodeBody>
          <PinColumn $pad="11px 0 0 8px">
            <PinRow $h={14} $ml={1}><ExecPin /></PinRow>
            <PinRow $mt={7}><Pin c={BLUE} /><PinLabel $ls={0}>Operation</PinLabel></PinRow>
          </PinColumn>
        </NodeBody>
      </Node>

      <VariableNode x={286} y={333} label="Self" color={BLUE} tint="#9dbd90" glow="#33442f" />
      <VariableNode x={302} y={397} label="Self" color={BLUE} tint="#9dbd90" glow="#33442f" />
      <VariableNode x={270} y={461} label="Color" color={STRUCT} tint="#3f71b4" glow="#14294a" />
      <VariableNode x={318} y={525} label="Number" color={GREEN} tint="#3fa68a" glow="#16493c" />
      <VariableNode x={350} y={573} label="Self" color={BLUE} tint="#9dbd90" glow="#33442f" />
      <EventBadge><MonitorBadge /></EventBadge>
    </Canvas>
  );
}

function TaskbarView() {
  return (
    <Taskbar>
      <TaskCell $w={49}>
        <svg width="17" height="17" viewBox="0 0 17 17"><path d="M0 2.400L7.400 1.300V8H0zM8.400 1.200L17 0v8H8.400zM0 9h7.400v6.700L0 14.600zM8.400 9H17v8l-8.600-1.200z" fill="#0a0a0a" /></svg>
      </TaskCell>
      <TaskSearch><SearchGlyph s={17} c="#222" w={1.300} />在这里输入你要搜索的内容</TaskSearch>
      <TaskCell $w={50}><svg width="18" height="18"><circle cx="9" cy="9" r="7" fill="none" stroke="#000" strokeWidth="2" /></svg></TaskCell>
      <TaskCell $w={46}>
        <svg width="18" height="18" viewBox="0 0 18 18"><path d="M1 1v3h11V1M1 17v-3h11v3M1.500 6.500h10v5h-10zM15.500 1v16" fill="none" stroke="#000" strokeWidth="1.300" /><rect x="14" y="5" width="3" height="3" /></svg>
      </TaskCell>
      <TaskCell $w={56}>
        <svg width="22" height="22" viewBox="0 0 22 22">
          <circle cx="11" cy="11" r="11" fill="#fbc116" />
          <path d="M1.500 5.500A11 11 0 0 1 20.500 5.500L11 6 6 13.500z" fill="#dd4b3e" />
          <path d="M1.500 5.500A11 11 0 0 0 10 22L14.500 14 11 16 6.500 13.500z" fill="#1fa15d" />
          <circle cx="11" cy="11" r="5" fill="#fff" /><circle cx="11" cy="11" r="4" fill="#4688f1" />
        </svg>
      </TaskCell>
      <TaskCell $w={41}>
        <svg width="22" height="20" viewBox="0 0 22 20"><path d="M0 1h8l2 2h12v15H0z" fill="#ffd466" /><path d="M0 1h8l2 3H0z" fill="#e8a31c" /><path d="M4 18v-7h14v7h-4v-4H8v4z" fill="#3d93d8" /></svg>
      </TaskCell>
      <TaskCell $w={56}>
        <svg width="20" height="21" viewBox="0 0 20 21"><path d="M1 1l18-1v20L0 21z" fill="#f1f1f1" stroke="#d8d8d8" strokeWidth=".6" /><text x="10" y="15.500" textAnchor="middle" fontFamily="Liberation Serif" fontSize="14" fill="#555">T</text></svg>
      </TaskCell>
      <TaskCell $w={46} $bg="#e9f3f7">
        <svg width="22" height="22" viewBox="0 0 22 22"><circle cx="11" cy="11" r="10.500" fill="#222" stroke="#777" /><g transform="translate(2.500 2) scale(.67)"><path d={UNREAL_PATH} fill="#fff" /></g></svg>
      </TaskCell>
      <TaskCell $w={50}>
        <svg width="21" height="21" viewBox="0 0 21 21"><circle cx="10.500" cy="10.500" r="10" fill="#1c1c1f" /><path d="M10.500 10.500C6 9 6 5 8 3M10.500 10.500C14 7.500 17 9 18 12M10.500 10.500C11 15 8 17.500 5 16.500" fill="none" stroke="#c9c9c9" strokeWidth="1.600" /></svg>
      </TaskCell>
      <TaskCell $w={4} />
      <TaskCell $w={40} $bg="linear-gradient(90deg, #cfd88c 0 30px, #b9ccd6 30px)">
        <svg width="24" height="24" viewBox="0 0 24 24"><rect width="23" height="23" rx="2" fill="#f5d400" /><circle cx="11" cy="9" r="6" fill="#fff" /><path d="M9 6l5 3-5 3z" fill="#f5d400" /><text x="3" y="20.500" fontFamily="Roboto" fontSize="6.500" fontWeight="700" fill="#222">Pla</text><rect x="12.500" y="10.500" width="4" height="13" rx="2" fill="#f5d400" stroke="#222" /><rect x="18.500" y="10.500" width="4" height="13" rx="2" fill="#f5d400" stroke="#222" /></svg>
      </TaskCell>
      <Tray>
        <TaskCell $w={24}><svg width="13" height="8"><path d="M1 7l5.500-5.500L12 7" fill="none" stroke="#111" strokeWidth="1.300" /></svg></TaskCell>
        <TaskCell $w={24}><svg width="17" height="15" viewBox="0 0 17 15"><path d="M5.500 1.700H16v8.600H5M8 13.500h6M11 10.500v3M.7.700h4v4h-4zM2.700 4.700v6.500h2.500" fill="none" stroke="#111" strokeWidth="1.300" /></svg></TaskCell>
        <TaskCell $w={24}><svg width="17" height="14" viewBox="0 0 17 14"><path d="M.7 4.500h2.500L6.500 1.200v11.600L3.200 9.500H.7z" fill="none" stroke="#111" /><path d="M8.500 4.500q1.800 2.500 0 5M11 2.500q3 4.500 0 9M13.500 1q4 6 0 12" fill="none" stroke="#111" /></svg></TaskCell>
        <TaskCell $w={21}>中</TaskCell>
        <Clock>19:26<br />2020/5/19</Clock>
        <TaskCell $w={46}>
          <svg width="28" height="24" viewBox="0 0 28 24"><path d="M3 2h16v12h-8v4l-4-4H3z" fill="#0a0a0a" /><path d="M5.500 5.500h11M5.500 8h11M5.500 10.500h11" stroke="#dde" /><circle cx="18" cy="18" r="7.500" fill="#dcdcdc" stroke="#777" /><text x="18" y="22" textAnchor="middle" fontFamily="Roboto" fontSize="12" fontWeight="500" fill="#000">4</text></svg>
        </TaskCell>
      </Tray>
    </Taskbar>
  );
}

export default function App() {
  return (
    <Screen>
      <Global />
      <TitleBar>
        <LogoBox><Unreal /></LogoBox>
        <EditorTab name="dust" w={200} pad={24} z={1} noClose />
        <EditorTab name="BandolierH" icon={<WidgetIcon />} z={1} />
        <EditorTab name="BandolierV" icon={<WidgetIcon />} z={1} />
        <EditorTab name="Bullet" icon={<WidgetIcon />} active z={3} />
        <EditorTab name="MainWidget" icon={<WidgetIcon />} z={1} />
        <EditorTab name="dust" icon={<BookIcon framed />} z={2} />
        <EditorTab name="MyDragDrop" icon={<RingIcon />} z={2} />
        <WindowButtons>
          <WinBtn $w={26}><svg width="11" height="4"><rect width="11" height="4" fill="#fff" /></svg></WinBtn>
          <WinBtn $w={24}><svg width="11" height="11"><path d="M4 1h6v7H8M1 3.500h6v6.500H1z" fill="none" stroke="#fff" strokeWidth="1.800" /></svg></WinBtn>
          <WinBtn $w={41}><svg width="11" height="10"><path d="M1 0l9 10M10 0L1 10" stroke="#fff" strokeWidth="2.600" /></svg></WinBtn>
        </WindowButtons>
      </TitleBar>
      <MenuBar>
        <MenuItem $w={39}>File</MenuItem>
        <MenuItem $w={41}>Edit</MenuItem>
        <MenuItem $w={50}>Asset</MenuItem>
        <MenuItem $w={46}>View</MenuItem>
        <MenuItem $w={55}>Debug</MenuItem>
        <MenuItem $w={63}>Window</MenuItem>
        <MenuItem $w={50}>Help</MenuItem>
        <ParentClass>Parent class: <u>User Widget</u></ParentClass>
      </MenuBar>
      <Toolbar>
        <DirtyCorner />
        <Tool w={62} icon={<CompileIcon />} label="Compile" />
        <CaretCell><Caret /></CaretCell>
        <Divider />
        <Tool w={50} icon={<SaveIcon />} label="Save" />
        <Tool w={54} icon={<BrowseIcon />} label="Browse" />
        <Divider />
        <Tool w={48} icon={<FindIcon />} label="Find" />
        <Tool w={100} icon={<HideIcon />} label="Hide Unrelated" />
        <CaretCell><Caret /></CaretCell>
        <Divider />
        <Tool w={92} icon={<ClassSettingsIcon />} label="Class Settings" />
        <Tool w={96} icon={<ClassDefaultsIcon />} label="Class Defaults" />
        <Divider />
        <Tool w={47} icon={<PlayIcon />} label="Play" />
        <CaretCell $w={31}><Caret /></CaretCell>
        <DebugBox>
          <DebugSelect>No debug object selected<Caret $c="#000" /></DebugSelect>
          <span>Debug Filter</span>
        </DebugBox>
        <Modes>
          <Designer><DesignerIcon /><ModeName>Designer</ModeName></Designer>
          <svg width="9" height="20" viewBox="0 0 9 20"><path d="M1.500 1L7 10l-5.500 9" fill="none" stroke="#aaa" strokeWidth="2" /></svg>
          <GraphMode><GraphIcon /><ModeName>Graph</ModeName></GraphMode>
        </Modes>
      </Toolbar>

      <Workspace>
        <LeftColumn>
          <TabStrip>
            <DockTab $pl={4}><BookIcon /><TabText>My Blueprint</TabText><Close $c="#222">×</Close></DockTab>
          </TabStrip>
          <BlueprintPanel>
            <SearchRow>
              <AddNew><Plus s={10} /><span>Add New</span><Caret $c="#fff" /></AddNew>
              <SearchField>Search<SearchGlyph /></SearchField>
              <ViewOptions><ViewEye /><Caret $c="#f4f4f4" /></ViewOptions>
            </SearchRow>
            <TreeArea>
              <Tree>
                <SectionHead title="Graphs" />
                <Row><Twisty /><RowIcon $w={19}><GridIcon /></RowIcon>EventGraph</Row>
                <Row $in={20}><RowIcon $w={19}><EventIcon /></RowIcon>Event Pre Construct</Row>
                <Row $in={20}><RowIcon $w={19}><EventIcon /></RowIcon>Event Construct</Row>
                <Row $mb={2} $in={20}><RowIcon $w={19}><EventIcon /></RowIcon>Event Tick</Row>
                <SectionHead title="Functions" note="(34 Overridable)" />
                <Row $h={18} $bold><Twisty />Drag and Drop</Row>
                <Row $in={20}><RowIcon $w={19}><OverrideIcon /></RowIcon>OnDragDetected</Row>
                <Row $h={18} $bold><Twisty />Mouse</Row>
                <Row $mb={2} $in={20}><RowIcon $w={19}><OverrideIcon /></RowIcon>OnMouseButtonDown</Row>
                <SectionHead title="Macros" mb={2} closed />
                <SectionHead title="Variables" />
                <Variable name="Image_139" icon={<ImageVarIcon />} />
                <Variable name="TextBlock_402" icon={<TextVarIcon />} />
                <Variable name="color" icon={<Pill c="#0448a8" t="#2a70d0" />} />
                <Variable name="number" icon={<Pill c="#13b98a" t="#5ceac2" />} mb={2} />
                <SectionHead title="Event Dispatchers" mb={2} closed />
                <SectionHead title="Local Variables" note="(OnDragDetected)" closed />
              </Tree>
              <ScrollThumb />
            </TreeArea>
          </BlueprintPanel>
          <TabStrip>
            <DockTab><InfoIcon /><TabText>Details</TabText><Close $c="#222">×</Close></DockTab>
          </TabStrip>
          <DetailsPanel />
        </LeftColumn>

        <RightColumn>
          <TabStrip>
            <DockTab $dim><GridIcon /><TabText>Event Graph</TabText><Close $c="#1a1a1a">×</Close></DockTab>
            <DockTab $lit><FuncIcon /><TabText>On Drag Detected</TabText><Close $c="#222">×</Close></DockTab>
            <DockTab $dim><FuncIcon /><TabText $w={99}>On Mouse Button Down</TabText><Close $c="#1a1a1a">×</Close></DockTab>
          </TabStrip>
          <GraphFrame><GraphCanvas /></GraphFrame>
          <TabStrip>
            <DockTab><LogIcon /><TabText>Compiler Results</TabText><Close $c="#222">×</Close></DockTab>
          </TabStrip>
          <ResultsPanel>
            <ResultsLog>
              <LogLine>Fast Template Successfully Created.</LogLine>
              <LogLine>[6249.05] Compile of Bullet successful! [in 150 ms] (/Game/ui/Bullet.Bullet)</LogLine>
            </ResultsLog>
            <ConsoleRow>
              <Console>Cmd<Caret $c="#fff" /><ConsoleInput>Enter Console Command</ConsoleInput></Console>
              <span>Clear</span>
            </ConsoleRow>
          </ResultsPanel>
        </RightColumn>
      </Workspace>
      <TaskbarView />

      <TutorialBadge>
        <svg width="18" height="20" viewBox="0 0 18 20"><path d="M1 7l8-6 8 6-8 6z" fill="#9cc4ee" /><path d="M4 10v5l5 4 5-4v-5l-5 4z" fill="#2e5590" /><path d="M2 8v9" stroke="#c8a040" strokeWidth="1.500" /></svg>
      </TutorialBadge>
      <ActivateNote>激活 Windows<p>转到“设置”以激活 Windows。</p></ActivateNote>
      <RedBox $x={598} $y={-2} $w={219} $h={39} />
      <RedBox $x={5} $y={481} $w={317} $h={45} />
      <RedBox $x={867} $y={303} $w={405} $h={398} />
    </Screen>
  );
}
